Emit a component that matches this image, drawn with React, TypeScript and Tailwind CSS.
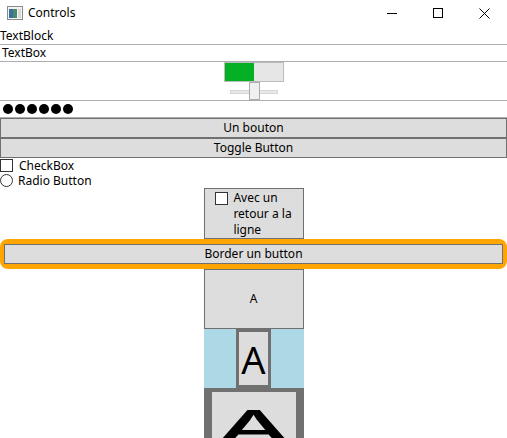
import React from "react";

function WinIcon() {
  return (
    <svg width="16" height="14" viewBox="0 0 16 14">
      <rect x="0.5" y="0.5" width="15" height="13" fill="#f4f4f4" stroke="#8a8a8a" />
      <rect x="2" y="3" width="8" height="9" fill="#4a8a6a" />
      <rect x="2" y="3" width="4" height="9" fill="#3a6fa0" />
      <rect x="11" y="3" width="3" height="9" fill="#d8d8d8" />
    </svg>
  );
}

function CaptionButtons() {
  return (
    <div className="ml-auto flex h-full">
      <div className="flex h-full w-[46px] items-center justify-center">
        <svg width="10" height="10" viewBox="0 0 10 10">
          <line x1="0" y1="5.5" x2="10" y2="5.5" stroke="#000" strokeWidth="1" />
        </svg>
      </div>
      <div className="flex h-full w-[46px] items-center justify-center">
        <svg width="10" height="10" viewBox="0 0 10 10">
          <rect x="0.5" y="0.5" width="9" height="9" fill="none" stroke="#000" strokeWidth="1" />
        </svg>
      </div>
      <div className="flex h-full w-[46px] items-center justify-center">
        <svg width="11" height="11" viewBox="0 0 11 11">
          <path d="M0.5 0.5 L10.5 10.5 M10.5 0.5 L0.5 10.5" stroke="#000" strokeWidth="1" />
        </svg>
      </div>
    </div>
  );
}

export default function App() {
  return (
    <div className="w-[507px] h-[438px] overflow-hidden bg-white font-['Noto_Sans',sans-serif] text-[12px] text-black">
      {/* Title bar */}
      <div className="flex h-[28px] items-start">
        <div className="flex h-[26px] items-center gap-[5px] pl-[7px]">
          <WinIcon />
          <span className="leading-[16px]">Controls</span>
        </div>
        <div className="ml-auto h-[26px] flex">
          <CaptionButtons />
        </div>
      </div>

      {/* TextBlock */}
      <div className="h-[16px] leading-[16px]">TextBlock</div>

      {/* TextBox */}
      <div className="h-[18px] border-y border-[#ABADB3] px-[2px] leading-[16px]">TextBox</div>

      {/* ProgressBar + Slider */}
      <div className="flex flex-col items-center">
        <div className="flex h-[20px] w-[60px] border border-[#BCBCBC] bg-[#E6E6E6]">
          <div className="h-full w-[29px] bg-[#06B025]" />
        </div>
        <div className="relative flex h-[18px] w-[60px] items-center justify-center">
          <div className="mx-[6px] mt-[1px] h-[4px] w-[50px] border border-[#D6D6D6] bg-[#E7EAEA]" />
          <div className="absolute left-[25px] top-0 h-[18px] w-[11px] border border-[#ACACAC] bg-[#F0F0F0]" />
        </div>
      </div>

      {/* PasswordBox */}
      <div className="flex h-[18px] items-center gap-[2px] border-y border-[#ABADB3] pl-[3px]">
        {[0, 1, 2, 3, 4, 5].map((i) => (
          <span key={i} className="h-[10px] w-[10px] rounded-full bg-black" />
        ))}
      </div>

      {/* Buttons */}
      <div className="flex h-[20px] items-center justify-center border border-[#707070] bg-[#DDDDDD] leading-[16px]">
        Un bouton
      </div>
      <div className="flex h-[20px] items-center justify-center border border-[#707070] bg-[#DDDDDD] leading-[16px]">
        Toggle Button
      </div>

      {/* CheckBox */}
      <div className="flex h-[15px] items-center gap-[6px]">
        <span className="h-[13px] w-[13px] border border-[#333333] bg-white" />
        <span className="leading-[14px]">CheckBox</span>
      </div>
      {/* Radio */}
      <div className="flex h-[15px] items-center gap-[5px]">
        <span className="h-[13px] w-[13px] rounded-full border border-[#333333] bg-white" />
        <span className="leading-[14px]">Radio Button</span>
      </div>

      {/* Button with checkbox content */}
      <div className="mx-auto flex h-[51px] w-[100px] items-center justify-center border border-[#707070] bg-[#DDDDDD]">
        <div className="flex items-start gap-[5px]">
          <span className="mt-[2px] h-[13px] w-[13px] shrink-0 border border-[#333333] bg-white" />
          <span className="leading-[16px]">
            Avec un
            <br />
            retour a la
            <br />
            ligne
          </span>
        </div>
      </div>

      {/* Bordered button */}
      <div className="h-[30px] rounded-[8px] border-x-[4px] border-y-[5px] border-[#FFA500]">
        <div className="flex h-full items-center justify-center border border-[#707070] bg-[#DDDDDD] leading-[16px]">
          Border un button
        </div>
      </div>

      {/* Column of A buttons */}
      <div className="mx-auto flex w-[100px] flex-col">
        <div className="flex h-[60px] items-center justify-center border border-[#707070] bg-[#DDDDDD] leading-[16px]">
          A
        </div>
        <div className="flex h-[59px] justify-center bg-[#ADD8E6]">
          <div className="flex h-full w-[35px] items-center justify-center border-[3px] border-[#707070] bg-[#DDDDDD]">
            <span className="text-[38px] leading-none">A</span>
          </div>
        </div>
        <div className="h-[50px] overflow-hidden border-x-[8px] border-t-[4px] border-[#707070] bg-[#DDDDDD]">
          <div className="flex justify-center pt-[10px]">
            <span className="inline-block origin-center scale-x-[2.3] text-[48px] font-medium leading-none">A</span>
          </div>
        </div>
      </div>
    </div>
  );
}
